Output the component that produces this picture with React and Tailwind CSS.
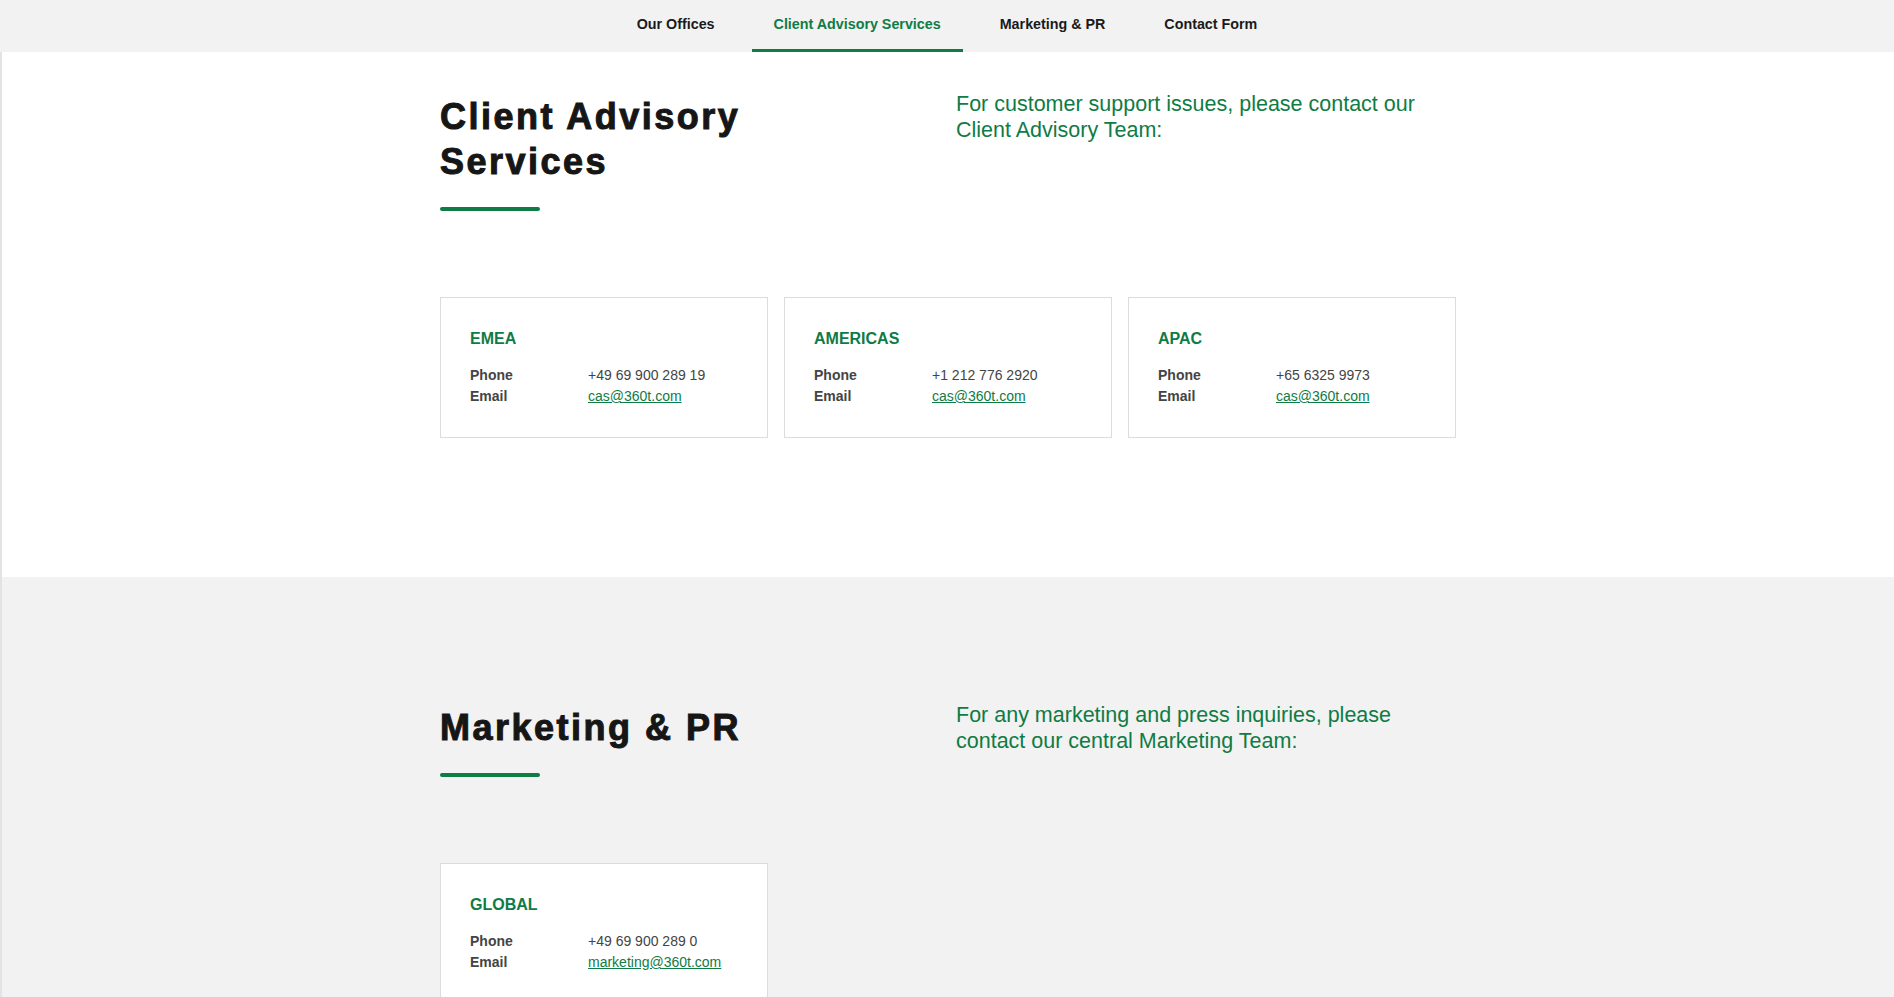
const tabs = ['Our Offices', 'Client Advisory Services', 'Marketing & PR', 'Contact Form'];

const advisory = [
  { region: 'EMEA', phone: '+49 69 900 289 19', email: 'cas@360t.com' },
  { region: 'AMERICAS', phone: '+1 212 776 2920', email: 'cas@360t.com' },
  { region: 'APAC', phone: '+65 6325 9973', email: 'cas@360t.com' },
];

const marketing = [
  { region: 'GLOBAL', phone: '+49 69 900 289 0', email: 'marketing@360t.com' },
];

function ContactCard({ region, phone, email }) {
  return (
    <div className="bg-white border border-[#dcdcdc] px-[29px] pt-[29px] pb-[30px]">
      <h4 className="text-[16px] leading-[24px] font-bold text-[#0f7b45] mb-[14px]">{region}</h4>
      <div className="grid grid-cols-[118px_1fr] text-[14px] leading-[21px] text-[#444]">
        <span className="font-bold">Phone</span>
        <span>{phone}</span>
        <span className="font-bold">Email</span>
        <a href="#" className="text-[#0f7b45] underline">{email}</a>
      </div>
    </div>
  );
}

function Section({ title, intro, cards, gray, top, bottom }) {
  return (
    <section className={`${gray ? 'bg-[#f2f2f2]' : 'bg-white'} ${top} ${bottom}`}>
      <div className="w-[1016px] mx-auto">
        <div className="grid grid-cols-2">
          <div>
            <h2 className="text-[36px] leading-[45px] font-bold tracking-[2.5px] text-[#161616] [-webkit-text-stroke:1px_#161616] w-[340px]">
              {title}
            </h2>
            <div className="w-[100px] h-[4px] rounded-full bg-[#0f7b45] mt-[23px]" />
          </div>
          <p className="pl-[8px] -mt-[3px] text-[21.5px] leading-[26px] text-[#0f7b45] w-[490px]">{intro}</p>
        </div>
        <div className="grid grid-cols-3 gap-[16px] mt-[86px]">
          {cards.map(c => (
            <ContactCard key={c.region} {...c} />
          ))}
        </div>
      </div>
    </section>
  );
}

export default function App() {
  return (
    <div className="min-h-screen bg-white font-['Liberation_Sans',Arial,sans-serif]">
      <nav className="h-[52px] bg-[#f2f2f2] flex justify-center items-stretch gap-[15px]">
        {tabs.map(t => {
          const active = t === 'Client Advisory Services';
          return (
            <a
              key={t}
              href="#"
              className={`px-[22px] flex items-center text-[14.3px] font-bold border-b-[3px] ${active ? 'text-[#0f7b45] border-[#0f7b45]' : 'text-[#1a1a1a] border-transparent'}`}
            >
              {t}
            </a>
          );
        })}
      </nav>
      <div className="border-l-2 border-[#e3e3e3]">
        <Section
          title="Client Advisory Services"
          intro="For customer support issues, please contact our Client Advisory Team:"
          cards={advisory}
          top="pt-[42px]"
          bottom="pb-[139px]"
        />
        <Section
          title="Marketing & PR"
          intro="For any marketing and press inquiries, please contact our central Marketing Team:"
          cards={marketing}
          gray
          top="pt-[128px]"
          bottom="pb-[80px]"
        />
      </div>
    </div>
  );
}
